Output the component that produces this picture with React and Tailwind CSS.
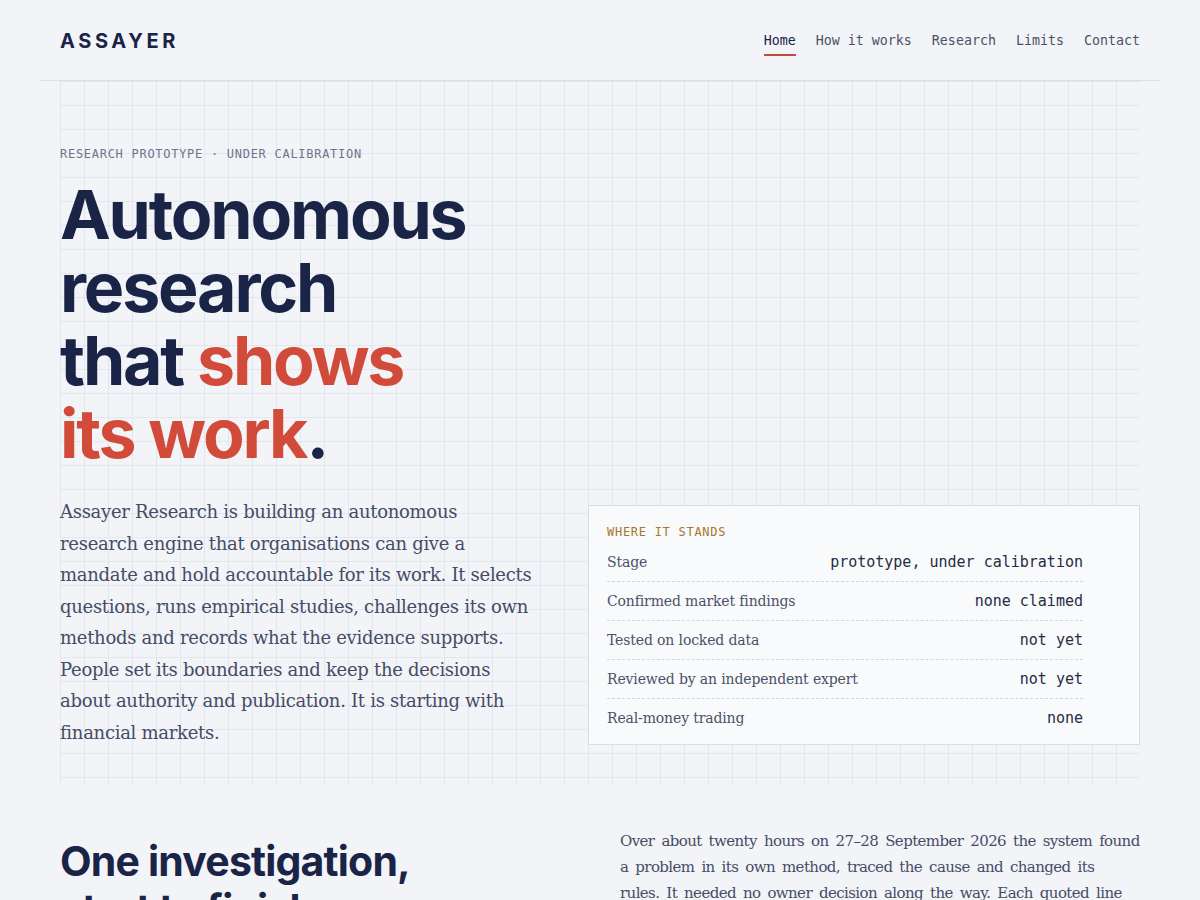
import React from "react";

const rows = [
  ["Stage", "prototype, under calibration"],
  ["Confirmed market findings", "none claimed"],
  ["Tested on locked data", "not yet"],
  ["Reviewed by an independent expert", "not yet"],
  ["Real-money trading", "none"],
];

export default function App() {
  const mono = "font-['DejaVu_Sans_Mono',monospace]";
  const serif = "font-['DejaVu_Serif',serif]";
  return (
    <div className="min-h-screen bg-[#f3f4f8] font-['Inter',sans-serif] text-[#1a2447]">
      <header className="mx-10 flex h-[81px] items-center justify-between border-b border-[#dcdfe6] px-5 pt-[2px]">
        <div className="text-[20px] font-bold tracking-[0.18em] text-[#1a2447]">ASSAYER</div>
        <nav className={`flex items-center gap-5 text-[13.3px] ${mono} text-[#4b5167]`}>
          <a className="relative text-[#1a2447]">
            Home
            <span className="absolute -bottom-[5px] left-0 right-0 h-[2px] bg-[#c9473a]" />
          </a>
          <a>How it works</a>
          <a>Research</a>
          <a>Limits</a>
          <a>Contact</a>
        </nav>
      </header>

      <section className="mx-[60px] h-[704px] bg-[linear-gradient(to_right,#e3e6ed_1px,transparent_1px),linear-gradient(to_bottom,#e3e6ed_1px,transparent_1px)] [background-size:24px_24px] pt-[65px]">
        <div className={`${mono} text-[12px] leading-4 tracking-[0.06em] text-[#6e748a]`}>
          RESEARCH PROTOTYPE · UNDER CALIBRATION
        </div>
        <h1 className="mt-4 text-[68px] font-bold leading-[73px] tracking-[-0.032em] text-[#1a2447]">
          Autonomous
          <br />
          research
          <br />
          that <span className="text-[#d24b3a]">shows</span>
          <br />
          <span className="text-[#d24b3a]">its work</span>.
        </h1>
        <div className="mt-[26px] grid grid-cols-[476px_552px] items-end gap-[52px]">
          <p className={`${serif} text-[18px] leading-[31.5px] tracking-[-0.016em] text-[#454c66]`}>
            Assayer Research is building an autonomous research engine that organisations can give a mandate and hold
            accountable for its work. It selects questions, runs empirical studies, challenges its own methods and
            records what the evidence supports. People set its boundaries and keep the decisions about authority and
            publication. It is starting with financial markets.
          </p>
          <div className="mb-[3px] border border-[#d9dce4] bg-[#f9fafc] px-[18px] pb-[6px] pt-[18px]">
            <div className={`${mono} text-[12px] leading-4 tracking-[0.06em] text-[#a5772b]`}>WHERE IT STANDS</div>
            <div className="mt-[3px] max-w-[476px]">
              {rows.map(([k, v], i) => (
                <div
                  key={k}
                  className={`flex h-[39px] items-center justify-between ${
                    i < rows.length - 1 ? "border-b border-dashed border-[#d3d6de]" : ""
                  }`}
                >
                  <span className={`${serif} text-[14px] tracking-[-0.01em] text-[#4b5167]`}>{k}</span>
                  <span className={`${mono} text-[15px] text-[#262c44]`}>{v}</span>
                </div>
              ))}
            </div>
          </div>
        </div>
      </section>

      <section className="mx-[60px] grid grid-cols-2 gap-10 pt-[43px]">
        <h2 className="pt-[9px] text-[41px] font-bold leading-[48px] tracking-[-0.02em] text-[#1a2447]">
          One investigation,
          <br />
          start to finish.
        </h2>
        <p
          className={`${serif} text-[15px] leading-[26px] tracking-[-0.6px] [word-spacing:2.8px] text-[#454c66]`}
        >
          Over about twenty hours on 27–28 September 2026 the system found a problem in its own method, traced the
          cause and changed its rules. It needed no owner decision along the way. Each quoted line links to the record
          it came from.
        </p>
      </section>
    </div>
  );
}
